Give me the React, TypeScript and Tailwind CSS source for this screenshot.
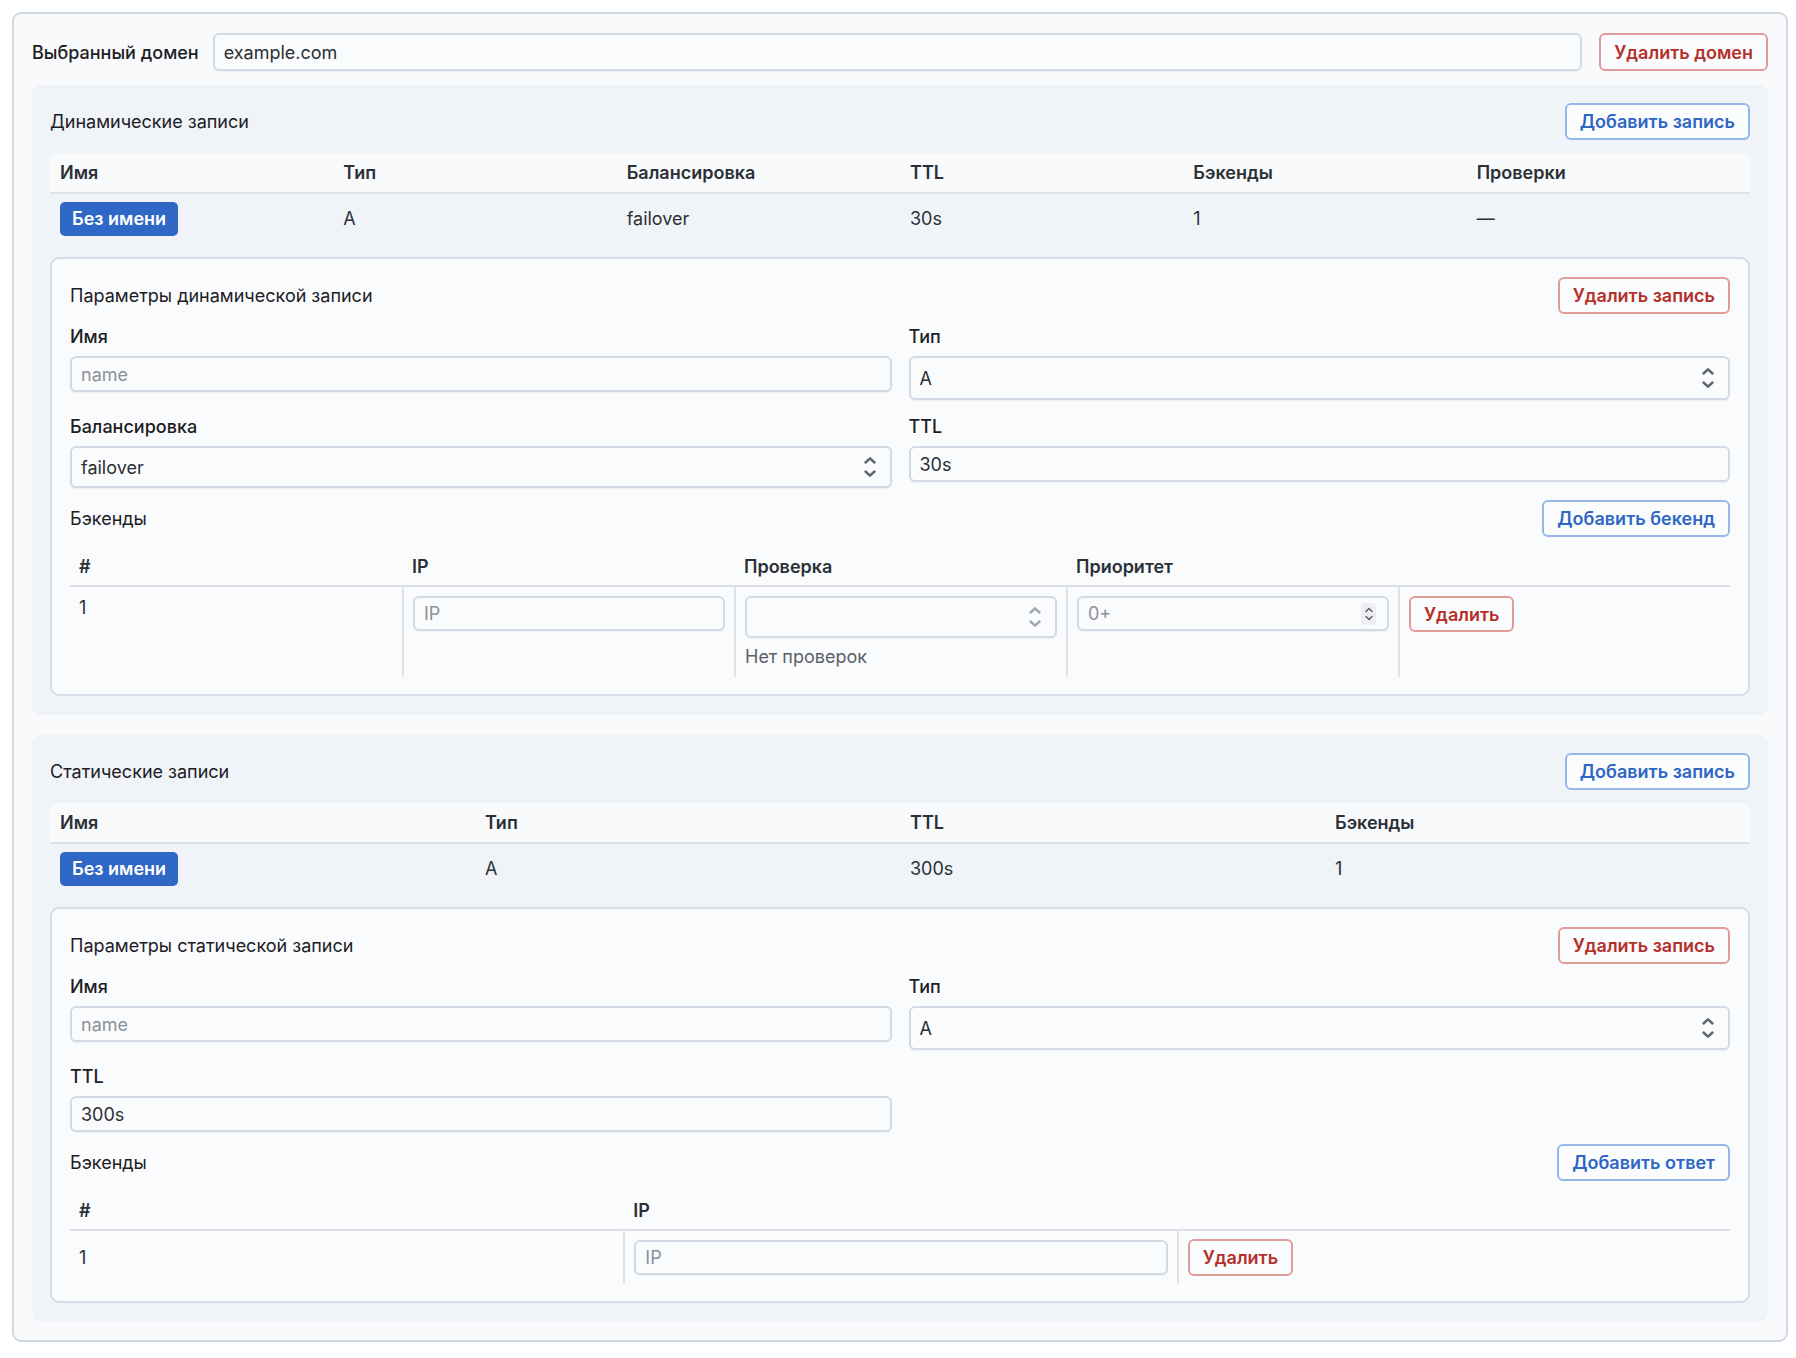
import React from "react";

function Chevrons({ color = "#5f6670", small = false }: { color?: string; small?: boolean }) {
  if (small) {
    return (
      <div className="flex h-[22px] w-[15px] items-center justify-center rounded-[4px] bg-[#eceef2]">
        <svg width="10" height="18" viewBox="0 0 10 18" fill="none" stroke="#555b63" strokeWidth="1.4" strokeLinecap="round" strokeLinejoin="round">
          <path d="M2 6.5 L5 3.5 L8 6.5" />
          <path d="M2 11.5 L5 14.5 L8 11.5" />
        </svg>
      </div>
    );
  }
  return (
    <svg width="14" height="24" viewBox="0 0 14 24" fill="none" stroke={color} strokeWidth="2.5" strokeLinecap="round" strokeLinejoin="round">
      <path d="M2.5 7.5 L7 3.3 L11.5 7.5" />
      <path d="M2.5 16.5 L7 20.7 L11.5 16.5" />
    </svg>
  );
}

function BlueBtn({ children }: { children: React.ReactNode }) {
  return (
    <button className="h-[37px] shrink-0 whitespace-nowrap rounded-[6px] border-2 border-[#95b8ea] bg-[#fbfcfe] px-[13px] text-[18px] font-semibold text-[#2d66c4]">
      {children}
    </button>
  );
}

function RedBtn({ children, h = "h-[37px]" }: { children: React.ReactNode; h?: string }) {
  return (
    <button className={`${h} shrink-0 whitespace-nowrap rounded-[6px] border-2 border-[#e39b99] bg-[#fbfcfe] px-[13px] text-[18px] font-semibold text-[#b5302a]`}>
      {children}
    </button>
  );
}

function TextInput({ value, placeholder, h = "h-[36px]" }: { value?: string; placeholder?: string; h?: string }) {
  return (
    <input
      readOnly
      defaultValue={value}
      placeholder={placeholder}
      className={`${h} w-full min-w-0 rounded-[6px] border-2 border-[#d3dae4] bg-[#fafbfd] px-[9px] text-[18px] text-[#2a2e34] shadow-[0_1px_1px_rgba(15,23,42,0.05)] outline-none placeholder:text-[#8c9199]`}
    />
  );
}

function SelectBox({ value, h = "h-[44px]", light = false }: { value?: string; h?: string; light?: boolean }) {
  return (
    <div className={`${h} flex w-full items-center justify-between rounded-[6px] border-2 border-[#d3dae4] bg-[#fafbfd] pl-[9px] pr-[13px] text-[18px] text-[#2a2e34] shadow-[0_1px_1px_rgba(15,23,42,0.05)]`}>
      <span>{value}</span>
      <Chevrons color={light ? "#a3a8af" : "#5f6670"} />
    </div>
  );
}

function Label({ children }: { children: React.ReactNode }) {
  return <div className="mb-[8px] text-[18px] font-medium leading-[22px] text-[#1c2025]">{children}</div>;
}

function RecordsTable({ cols, headers, cells }: { cols: string; headers: string[]; cells: React.ReactNode[] }) {
  return (
    <div className="mt-[13px]">
      <div className={`grid ${cols} h-[41px] items-center rounded-t-[8px] border-b-2 border-[#dde2e9] bg-[#f8fafc] text-[18px] font-semibold text-[#2b3037]`}>
        {headers.map((h) => (
          <div key={h} className="px-[10px]">{h}</div>
        ))}
      </div>
      <div className={`grid ${cols} h-[49px] items-center text-[18px] text-[#2b3037]`}>
        {cells.map((c, i) => (
          <div key={i} className="px-[10px]">{c}</div>
        ))}
      </div>
    </div>
  );
}

function NoNameBtn() {
  return (
    <button className="h-[34px] whitespace-nowrap rounded-[5px] bg-[#2f67c6] px-[12px] text-[18px] font-semibold text-white">Без имени</button>
  );
}

function CardHeader({ title }: { title: string }) {
  return (
    <div className="flex items-center justify-between">
      <span className="text-[18px] text-[#1c2025]">{title}</span>
      <RedBtn>Удалить запись</RedBtn>
    </div>
  );
}

function BackendsHeader({ btn }: { btn: string }) {
  return (
    <div className="mt-[12px] flex items-center justify-between">
      <span className="text-[18px] text-[#1c2025]">Бэкенды</span>
      <BlueBtn>{btn}</BlueBtn>
    </div>
  );
}

function DynamicCard() {
  return (
    <div className="mt-[14px] rounded-[9px] border-2 border-[#d6dde6] bg-[#fafbfd] px-[18px] pb-[17px] pt-[18px]">
      <CardHeader title="Параметры динамической записи" />
      <div className="mt-[12px] grid grid-cols-2 gap-x-[17px] gap-y-[16px]">
        <div>
          <Label>Имя</Label>
          <TextInput placeholder="name" />
        </div>
        <div>
          <Label>Тип</Label>
          <SelectBox value="A" />
        </div>
        <div>
          <Label>Балансировка</Label>
          <SelectBox value="failover" h="h-[42px]" />
        </div>
        <div>
          <Label>TTL</Label>
          <TextInput value="30s" />
        </div>
      </div>
      <BackendsHeader btn="Добавить бекенд" />
      <div className="mt-[10px]">
        <div className="grid h-[40px] grid-cols-5 items-center border-b-2 border-[#dcdfe4] text-[18px] font-semibold text-[#2b3037]">
          <div className="px-[9px]">#</div>
          <div className="px-[10px]">IP</div>
          <div className="px-[10px]">Проверка</div>
          <div className="px-[10px]">Приоритет</div>
          <div />
        </div>
        <div className="grid grid-cols-5 text-[18px] text-[#2b3037]">
          <div className="px-[9px] pt-[9px] leading-[24px]">1</div>
          <div className="border-l-2 border-[#dfe2e7] px-[9px] pb-[9px] pt-[9px]">
            <TextInput placeholder="IP" h="h-[35px]" />
          </div>
          <div className="border-l-2 border-[#dfe2e7] px-[9px] pb-[9px] pt-[9px]">
            <SelectBox h="h-[42px]" light />
            <div className="mt-[8px] text-[18px] leading-[22px] text-[#5b6068]">Нет проверок</div>
          </div>
          <div className="border-l-2 border-[#dfe2e7] px-[9px] pb-[9px] pt-[9px]">
            <div className="flex h-[35px] w-full items-center justify-between rounded-[6px] border-2 border-[#d3dae4] bg-[#fafbfd] pl-[9px] pr-[11px] text-[18px] shadow-[0_1px_1px_rgba(15,23,42,0.05)]">
              <span className="text-[#8c9199]">0+</span>
              <Chevrons small />
            </div>
          </div>
          <div className="border-l-2 border-[#dfe2e7] px-[9px] pb-[9px] pt-[9px]">
            <RedBtn h="h-[36px]">Удалить</RedBtn>
          </div>
        </div>
      </div>
    </div>
  );
}

function StaticCard() {
  return (
    <div className="mt-[14px] rounded-[9px] border-2 border-[#d6dde6] bg-[#fafbfd] px-[18px] pb-[17px] pt-[18px]">
      <CardHeader title="Параметры статической записи" />
      <div className="mt-[12px] grid grid-cols-2 gap-x-[17px] gap-y-[16px]">
        <div>
          <Label>Имя</Label>
          <TextInput placeholder="name" />
        </div>
        <div>
          <Label>Тип</Label>
          <SelectBox value="A" />
        </div>
        <div>
          <Label>TTL</Label>
          <TextInput value="300s" />
        </div>
        <div />
      </div>
      <BackendsHeader btn="Добавить ответ" />
      <div className="mt-[10px]">
        <div className="grid h-[40px] grid-cols-3 items-center border-b-2 border-[#dcdfe4] text-[18px] font-semibold text-[#2b3037]">
          <div className="px-[9px]">#</div>
          <div className="px-[10px]">IP</div>
          <div />
        </div>
        <div className="grid grid-cols-3 text-[18px] text-[#2b3037]">
          <div className="flex items-center px-[9px]">1</div>
          <div className="border-l-2 border-[#dfe2e7] px-[9px] py-[9px]">
            <TextInput placeholder="IP" h="h-[35px]" />
          </div>
          <div className="border-l-2 border-[#dfe2e7] px-[9px] py-[8px]">
            <RedBtn h="h-[37px]">Удалить</RedBtn>
          </div>
        </div>
      </div>
    </div>
  );
}

export default function App() {
  return (
    <div className="min-h-screen bg-white pb-[12px] pl-[12px] pr-[8px] pt-[12px] font-['Inter',sans-serif] text-[18px] text-[#1f2329]">
      <div className="rounded-[9px] border-2 border-[#d0d8e2] bg-[#f9fafc] px-[18px] pb-[18px] pt-[19px]">
        <div className="flex items-center">
          <span className="mr-[14px] shrink-0 whitespace-nowrap text-[18px] font-medium text-[#1c2025]">Выбранный домен</span>
          <TextInput value="example.com" h="h-[38px]" />
          <div className="ml-[17px] shrink-0">
            <RedBtn h="h-[38px]">Удалить домен</RedBtn>
          </div>
        </div>

        <div className="mt-[14px] rounded-[9px] bg-[#f0f3f8] px-[18px] pb-[19px] pt-[18px]">
          <div className="flex items-center justify-between">
            <span className="text-[18px] text-[#1c2025]">Динамические записи</span>
            <BlueBtn>Добавить запись</BlueBtn>
          </div>
          <RecordsTable
            cols="grid-cols-6"
            headers={["Имя", "Тип", "Балансировка", "TTL", "Бэкенды", "Проверки"]}
            cells={[<NoNameBtn key="n" />, "A", "failover", "30s", "1", "—"]}
          />
          <DynamicCard />
        </div>

        <div className="mt-[20px] rounded-[9px] bg-[#f0f3f8] px-[18px] pb-[19px] pt-[18px]">
          <div className="flex items-center justify-between">
            <span className="text-[18px] text-[#1c2025]">Статические записи</span>
            <BlueBtn>Добавить запись</BlueBtn>
          </div>
          <RecordsTable
            cols="grid-cols-4"
            headers={["Имя", "Тип", "TTL", "Бэкенды"]}
            cells={[<NoNameBtn key="n" />, "A", "300s", "1"]}
          />
          <StaticCard />
        </div>
      </div>
    </div>
  );
}
